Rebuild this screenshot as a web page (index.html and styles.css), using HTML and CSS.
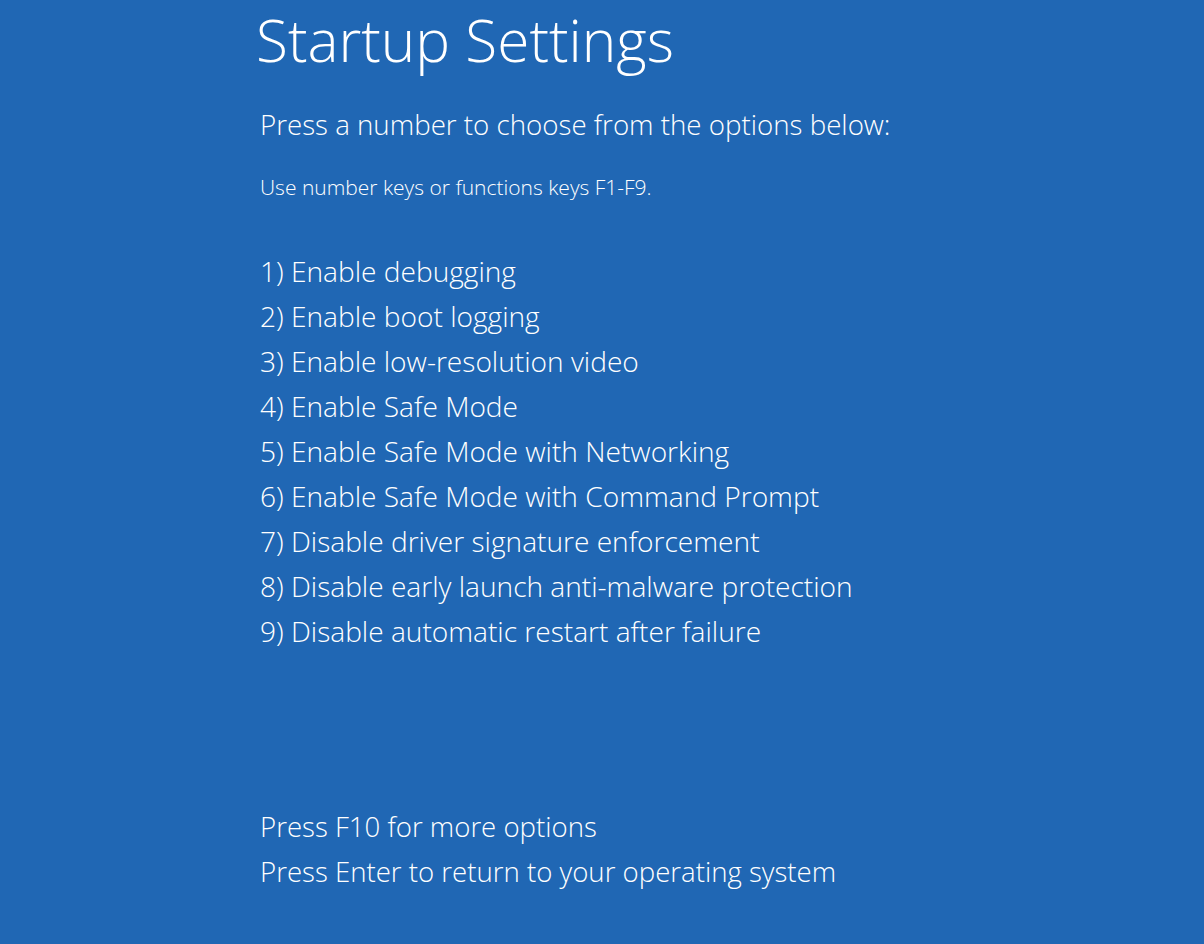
FILE: index.html
```html
<!DOCTYPE html>
<html lang="en">
<head>
    <meta charset="UTF-8">
    <title>Startup Settings</title>
    <link rel="stylesheet" href="styles.css">
</head>
<body>
    <div class="screen">
        <h1 class="title">Startup Settings</h1>
        <p class="prompt">Press a number to choose from the options below:</p>
        <p class="hint">Use number keys or functions keys F1-F9.</p>
        <ol class="options">
            <li>1) Enable debugging</li>
            <li>2) Enable boot logging</li>
            <li>3) Enable low-resolution video</li>
            <li>4) Enable Safe Mode</li>
            <li>5) Enable Safe Mode with Networking</li>
            <li>6) Enable Safe Mode with Command Prompt</li>
            <li>7) Disable driver signature enforcement</li>
            <li>8) Disable early launch anti-malware protection</li>
            <li>9) Disable automatic restart after failure</li>
        </ol>
        <div class="footer">
            <p>Press F10 for more options</p>
            <p>Press Enter to return to your operating system</p>
        </div>
    </div>
</body>
</html>
```

FILE: styles.css
```css
html, body {
    margin: 0;
    padding: 0;
    height: 100%;
}
body {
    background-color: #2067b4;
    color: #ffffff;
    font-family: "Open Sans", "Noto Sans", sans-serif;
    font-weight: 350;
    overflow: hidden;
}
.screen {
    padding: 0 0 0 256px;
}
.title {
    margin: 0;
    padding-top: 3px;
    font-size: 58.5px;
    font-weight: 300;
    line-height: 72px;
}
.prompt {
    margin: 31px 0 0 4px;
    font-size: 27.7px;
    line-height: 36px;
}
.hint {
    margin: 32px 0 0 4px;
    font-size: 21px;
    line-height: 26px;
}
.options {
    list-style: none;
    margin: 49px 0 0 4px;
    padding: 0;
}
.options li {
    font-size: 28.1px;
    line-height: 45px;
}
.footer {
    margin: 150px 0 0 4px;
}
.footer p {
    margin: 0;
    font-size: 27.6px;
    line-height: 45px;
}
```
